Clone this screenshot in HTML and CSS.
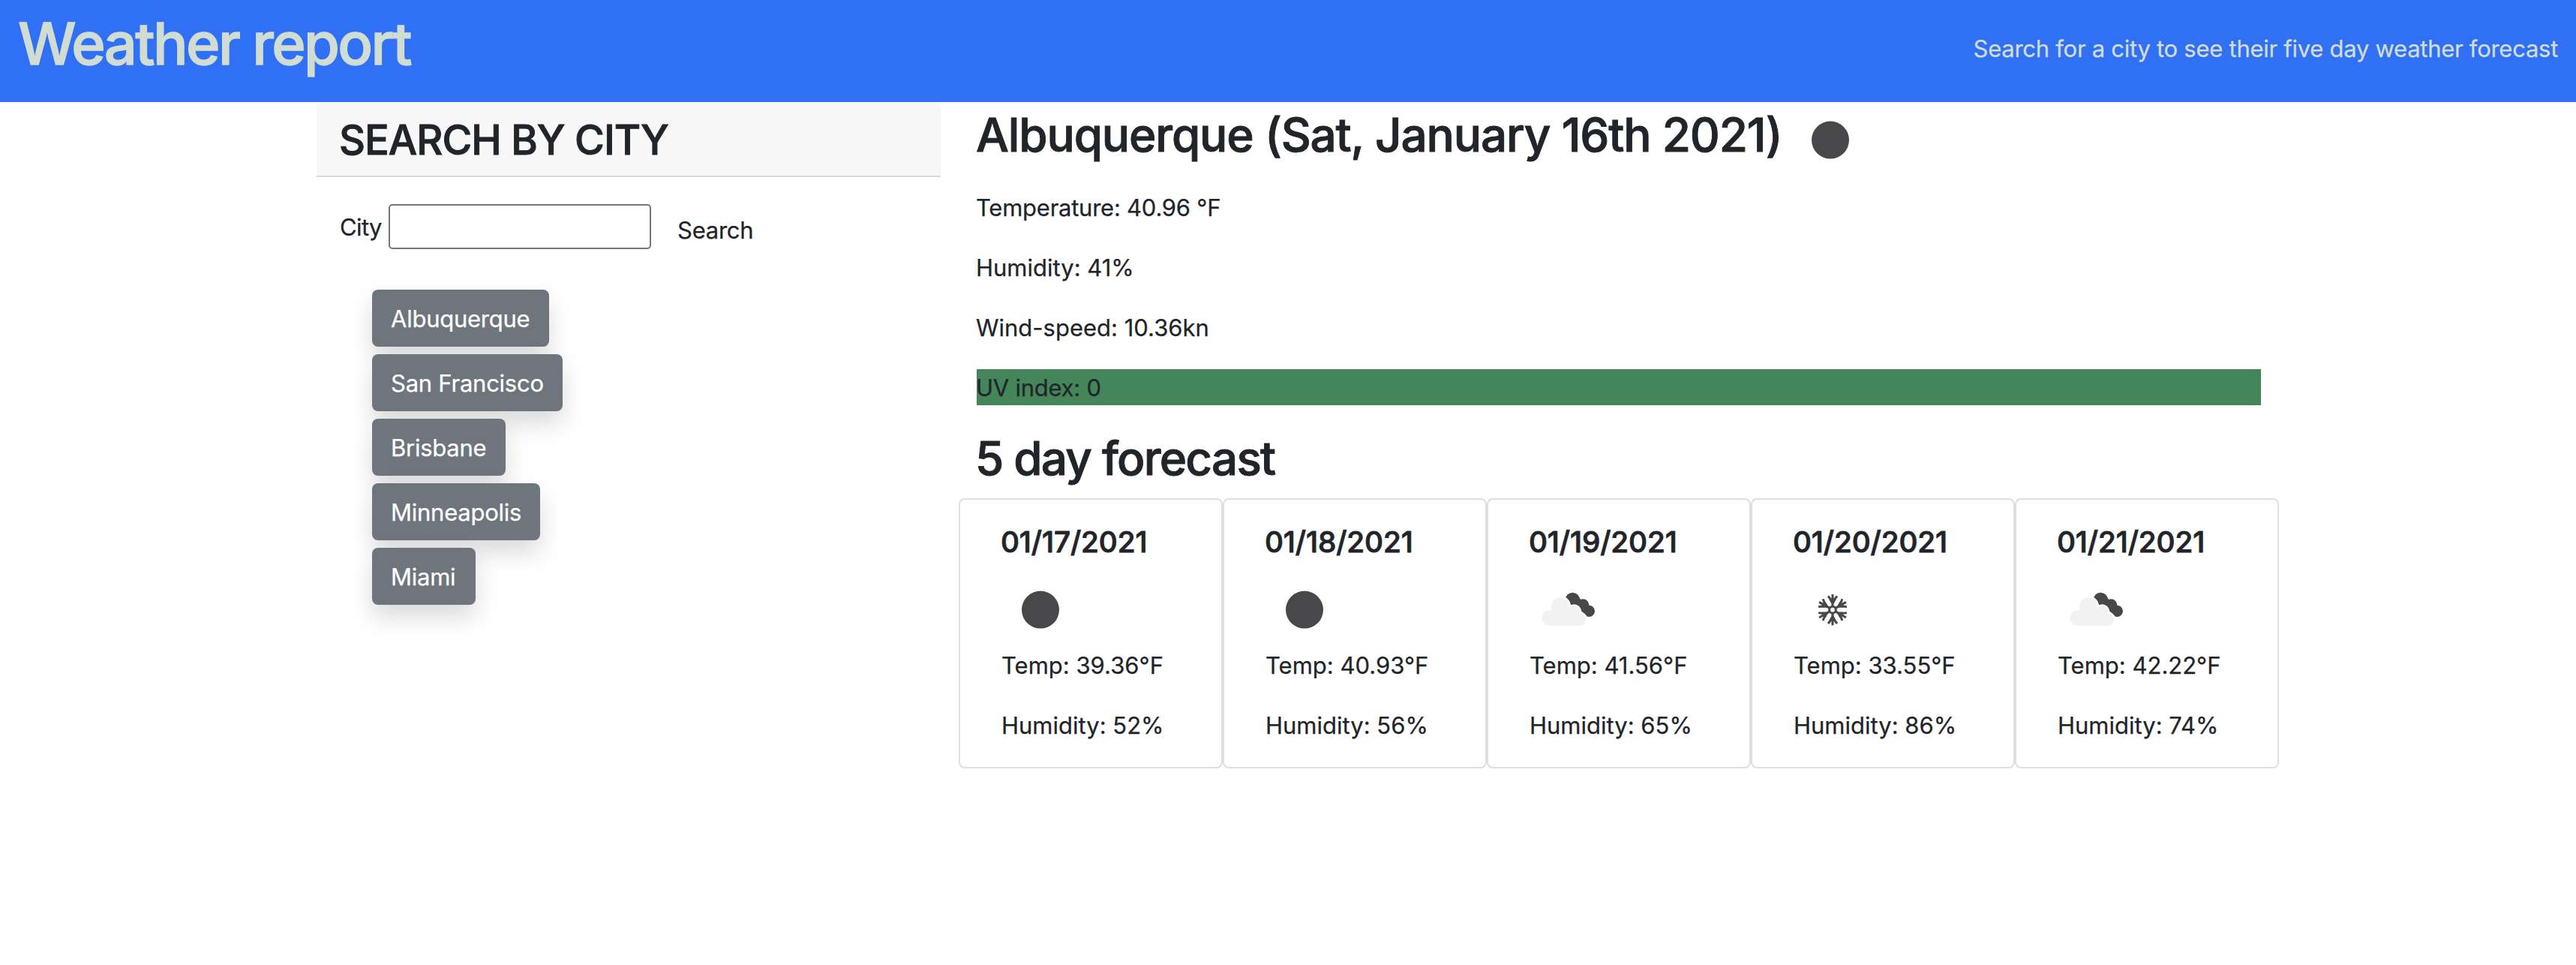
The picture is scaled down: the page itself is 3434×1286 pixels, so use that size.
FILE: index.html
```
<!DOCTYPE html>
<html lang="en">
<head>
<meta charset="utf-8">
<title>Weather report</title>
<link rel="stylesheet" href="styles.css">
</head>
<body>
<svg class="sprite" aria-hidden="true">
  <symbol id="clear" viewBox="0 0 100 100"><circle cx="51" cy="50.6" r="25" fill="#48484a"/></symbol>
  <symbol id="clouds" viewBox="0 0 300 300">
    <g fill="#48484a"><circle cx="169" cy="112" r="29"/><circle cx="211" cy="133" r="24"/><circle cx="235" cy="157" r="23"/><path d="M160 120L185 95L245 150L225 175Z"/></g>
    <path d="M75 215A28 28 0 0 1 48 187A28 28 0 0 1 84 155C84 116 96 103 118 103C142 103 156 118 158 144C178 124 205 146 197 166A25 25 0 0 1 204 215Z" fill="#f1f1f1" stroke="#fff" stroke-width="12" paint-order="stroke"/>
  </symbol>
  <symbol id="snow" viewBox="0 0 300 300">
    <g transform="translate(153 152)" fill="none" stroke="#48484a" stroke-width="9">
      <circle r="13"/>
      <g id="arm"><path d="M0-12V-62M-18-55L0-32L18-55"/><path d="M-11-43L0-24L11-43" stroke-width="7"/></g>
      <use href="#arm" transform="rotate(60)"/><use href="#arm" transform="rotate(120)"/><use href="#arm" transform="rotate(180)"/><use href="#arm" transform="rotate(240)"/><use href="#arm" transform="rotate(300)"/>
    </g>
  </symbol>
</svg>
<header class="navbar">
  <h1 class="brand">Weather report</h1>
  <p class="tagline">Search for a city to see their five day weather forecast</p>
</header>
<main class="container">
  <aside class="search-card">
    <h3 class="card-header">SEARCH BY CITY</h3>
    <form class="search-form">
      <label class="city-label" for="city">City</label>
      <input class="city-input" id="city" type="text">
      <button class="search-btn" type="button">Search</button>
    </form>
    <div class="history">
      <button class="city-btn b1" type="button">Albuquerque</button>
      <button class="city-btn b2" type="button">San Francisco</button>
      <button class="city-btn b3" type="button">Brisbane</button>
      <button class="city-btn b4" type="button">Minneapolis</button>
      <button class="city-btn b5" type="button">Miami</button>
    </div>
  </aside>
  <section class="report">
    <div class="current">
      <h2 class="city-title">Albuquerque (Sat, January 16th 2021)<svg class="icon"><use href="#clear"/></svg></h2>
      <p class="stat">Temperature: 40.96 °F</p>
      <p class="stat wide">Humidity: 41%</p>
      <p class="stat wide">Wind-speed: 10.36kn</p>
      <p class="stat uv">UV index: 0</p>
      <h2 class="forecast-title">5 day forecast</h2>
    </div>
    <div class="days">
      <article class="day"><h5 class="date">01/17/2021</h5><svg class="icon"><use href="#clear"/></svg><p class="stat wide">Temp: 39.36°F</p><p class="stat wide">Humidity: 52%</p></article>
      <article class="day"><h5 class="date">01/18/2021</h5><svg class="icon"><use href="#clear"/></svg><p class="stat wide">Temp: 40.93°F</p><p class="stat wide">Humidity: 56%</p></article>
      <article class="day"><h5 class="date">01/19/2021</h5><svg class="icon"><use href="#clouds"/></svg><p class="stat wide">Temp: 41.56°F</p><p class="stat wide">Humidity: 65%</p></article>
      <article class="day"><h5 class="date">01/20/2021</h5><svg class="icon"><use href="#snow"/></svg><p class="stat wide">Temp: 33.55°F</p><p class="stat wide">Humidity: 86%</p></article>
      <article class="day"><h5 class="date">01/21/2021</h5><svg class="icon"><use href="#clouds"/></svg><p class="stat wide">Temp: 42.22°F</p><p class="stat wide">Humidity: 74%</p></article>
    </div>
  </section>
</main>
</body>
</html>
```
FILE: styles.css
```
* { box-sizing: border-box; margin: 0; padding: 0; }
body {
  font: 400 31px/48px Inter, "Liberation Sans", sans-serif;
  letter-spacing: -0.008em;
  color: #212529;
  background: #fff;
  -webkit-text-stroke: .25px;
}
button, input { font: inherit; letter-spacing: inherit; color: inherit; }
h1, h2, h3, h5 { font-weight: 500; white-space: nowrap; -webkit-text-stroke: .9px; }
.sprite { display: none; }
.navbar {
  display: flex;
  justify-content: space-between;
  height: 136px;
  padding: 10px 24px 0;
  background: #2f70f5;
  color: #d1dcd3;
}
.brand { font-size: 77.5px; line-height: 96px; letter-spacing: -0.034em; -webkit-text-stroke: 1.3px; }
.tagline { padding-top: 31px; letter-spacing: -0.0088em; }
.container { display: flex; gap: 48px; padding-left: 422px; }
.search-card { width: 832px; }
.card-header {
  height: 100px;
  padding: 17px 30px;
  font-size: 54.3px;
  line-height: 67px;
  letter-spacing: -0.0186em;
  background: #f7f7f7;
  border-bottom: 2px solid #d8d8d8;
  border-radius: 8px 8px 0 0;
}
.search-form { display: flex; align-items: flex-start; height: 150px; padding: 36px 32px 0 31px; }
.city-label { width: 65px; padding-top: 7px; letter-spacing: -.02em; }
.city-input {
  width: 350px;
  height: 60px;
  border: 2px solid #767676;
  border-radius: 5px;
  background: #fff;
}
.search-btn { margin: 11px 0 0 35px; border: 0; background: none; line-height: 48px; }
.history { display: flex; flex-direction: column; align-items: flex-start; gap: 10px; padding-left: 74px; }
.city-btn {
  height: 76px;
  padding: 15px 0 13px 25px;
  border: 0;
  border-radius: 8px;
  background: #6e757d;
  color: #fff;
  line-height: 48px;
  text-align: left;
  box-shadow: 0 16px 32px rgba(0, 0, 0, .15);
}
.b1 { width: 236px; }
.b2 { width: 254px; }
.b3 { width: 178px; }
.b4 { width: 224px; }
.b5 { width: 138px; }
.report { width: 1760px; margin-left: -24px; }
.current { padding: 0 24px; }
.city-title {
  display: flex;
  height: 116px;
  padding-top: 5px;
  font-size: 62px;
  line-height: 77px;
  letter-spacing: -0.0184em;
  text-indent: -1px;
}
.city-title .icon { margin: -5px 0 0 14px; }
.icon { display: block; width: 100px; height: 100px; }
.stat { height: 48px; margin-bottom: 32px; padding-top: 1px; line-height: 48px; text-indent: -1px; }
.wide { letter-spacing: 0; }
.uv { background: #448559; }
.forecast-title {
  height: 92px;
  font-size: 62px;
  line-height: 78px;
  letter-spacing: -0.0287em;
  text-indent: -2px;
}
.days { display: flex; }
.day {
  width: 352px;
  height: 360px;
  padding: 32px 0 0 56px;
  border: 2px solid #dfdfdf;
  border-radius: 8px;
}
.date { margin-bottom: 16px; font-size: 38.7px; line-height: 48px; letter-spacing: -.003em; text-indent: -2px; }
```
